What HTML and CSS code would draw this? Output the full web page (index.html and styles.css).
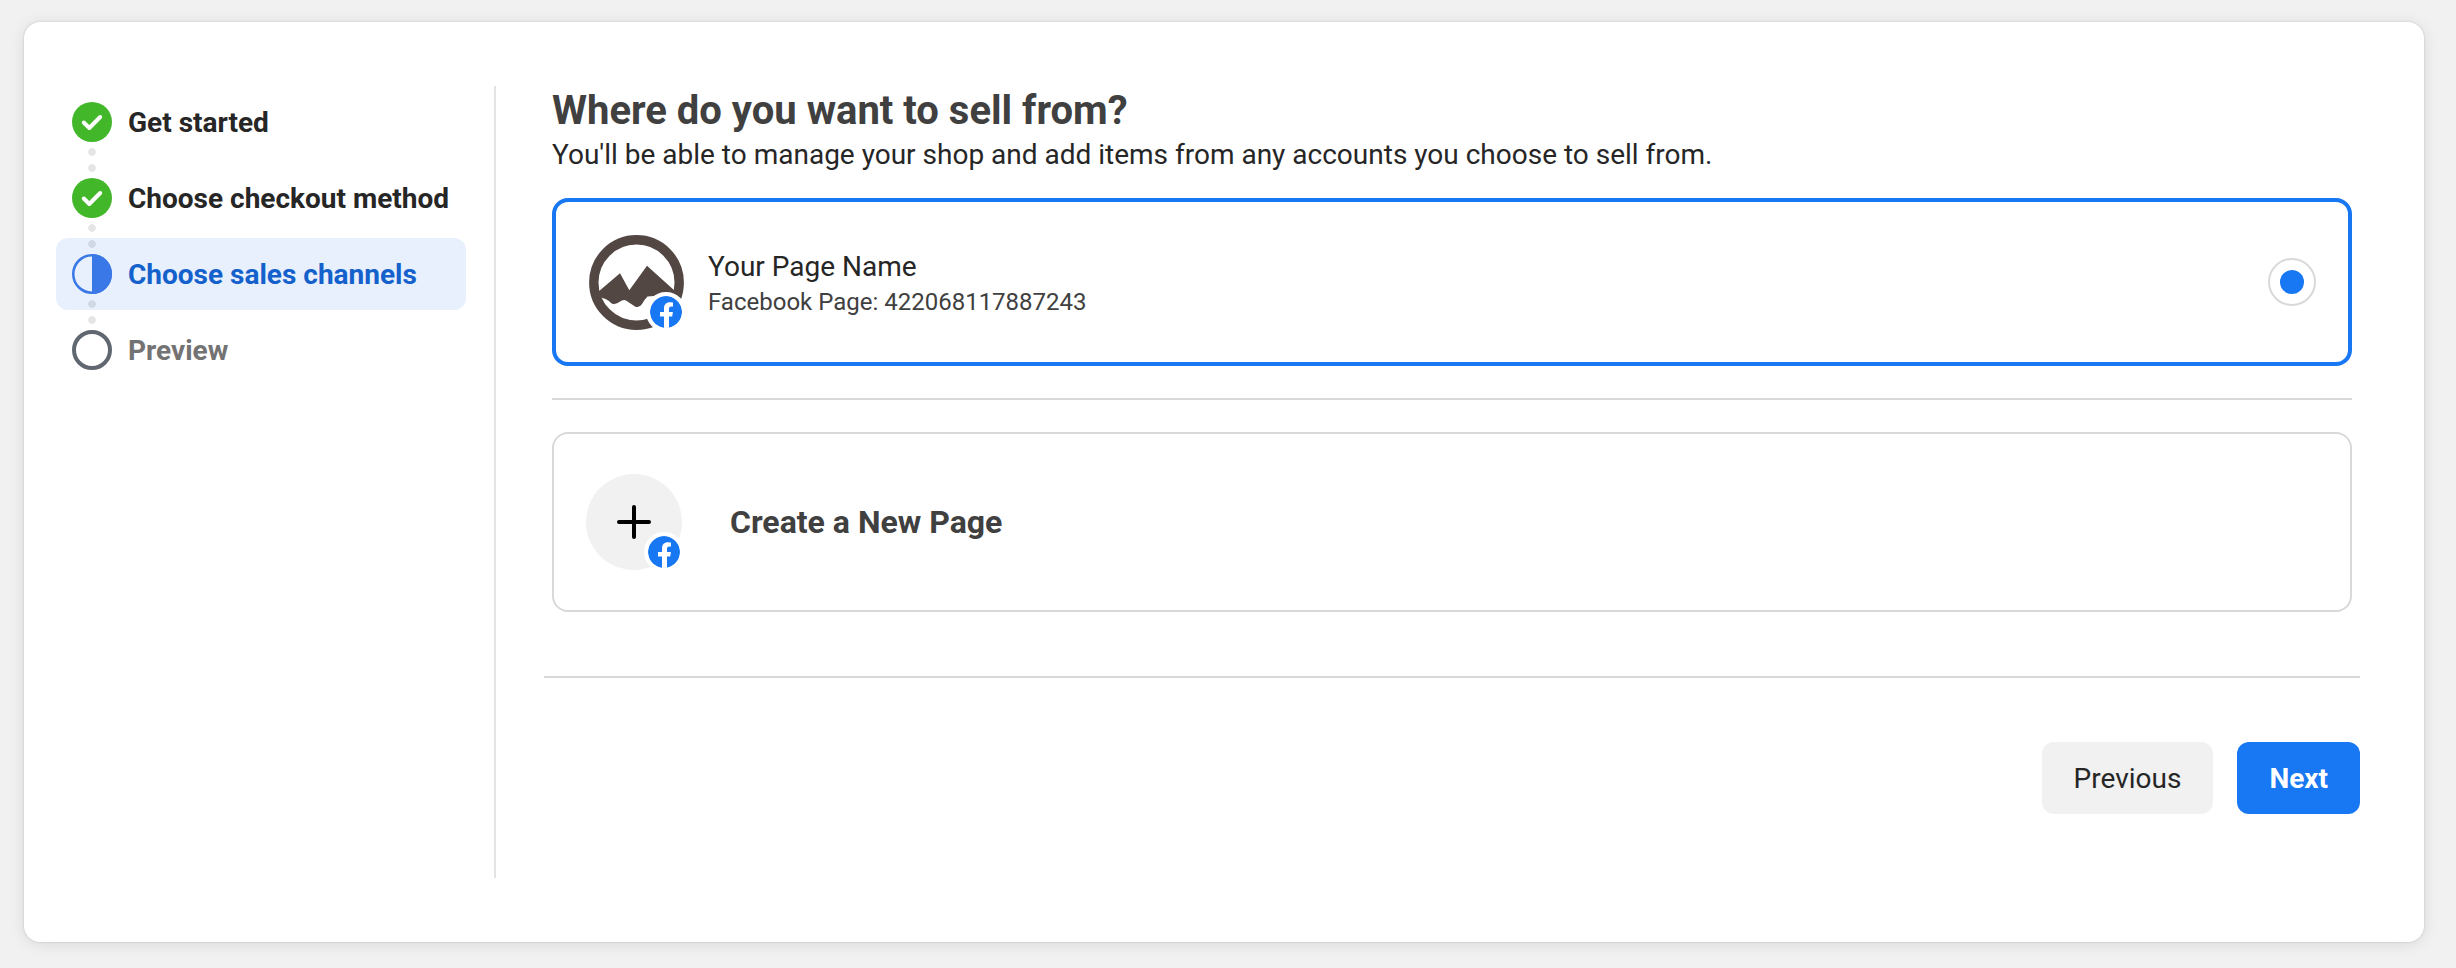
FILE: index.html
```html
<!DOCTYPE html>
<html lang="en">
<head>
  <meta charset="UTF-8">
  <meta name="viewport" content="width=device-width, initial-scale=1.0">
  <title>Choose sales channels</title>
  <link rel="stylesheet" href="styles.css">
</head>
<body>
  <!-- shared facebook badge -->
  <svg class="sprite" aria-hidden="true">
    <symbol id="fb" viewBox="0 0 32 32">
      <circle cx="16" cy="16" r="16" fill="#1877f2"/>
      <path fill="#fff" d="M14 32V20.500h-4V16h4v-3.500c0-4 2.300-6.200 6-6.200 1.700 0 3 .3 3 .3v3.900h-1.500c-2 0-2.500 1.200-2.500 2.400V16h3.900l-.7 4.500H19V32z"/>
    </symbol>
    <symbol id="check" viewBox="0 0 40 40">
      <circle cx="20" cy="20" r="20" fill="#42b72a"/>
      <path d="M11.800 20.500l5.500 5.500L28.200 15" fill="none" stroke="#fff" stroke-width="4" stroke-linecap="round" stroke-linejoin="round"/>
    </symbol>
  </svg>

  <div class="panel">
    <nav class="sidebar">
      <ol class="steps">
        <li class="step">
          <svg class="step-icon"><use href="#check"/></svg>
          <span>Get started</span>
        </li>
        <li class="step">
          <svg class="step-icon"><use href="#check"/></svg>
          <span>Choose checkout method</span>
        </li>
        <li class="step active" aria-current="step">
          <svg class="step-icon" viewBox="0 0 40 40">
            <circle cx="20" cy="20" r="18.750" fill="none" stroke="#3b78e7" stroke-width="2.500"/>
            <path d="M20 0a20 20 0 0 1 0 40z" fill="#3b78e7"/>
          </svg>
          <span>Choose sales channels</span>
        </li>
        <li class="step pending">
          <svg class="step-icon" viewBox="0 0 40 40">
            <circle cx="20" cy="20" r="18" fill="none" stroke="#606770" stroke-width="4"/>
          </svg>
          <span>Preview</span>
        </li>
      </ol>
    </nav>

    <form class="main">
      <div class="content">
        <h1>Where do you want to sell from?</h1>
        <p class="intro">You'll be able to manage your shop and add items from any accounts you choose to sell from.</p>

        <label class="option selected" for="page">
          <span class="avatar">
            <svg class="logo" viewBox="0 0 96 96">
              <circle cx="48.500" cy="48.500" r="42.700" fill="#fff" stroke="#524743" stroke-width="9.400"/>
              <path fill="#524743" d="M10 58L32 39.300 41.300 56.300 59 31.700 87 57V68L66 62l-6.500.5Q56 66 54 70Q51 74.500 47 72.500L38 66.500Q36 65.500 33 67Q28 70.500 25 70Q23 69.500 21 67Q18 64.500 13 63.500L10 66z"/>
            </svg>
            <svg class="badge"><use href="#fb"/></svg>
          </span>
          <span class="details">
            <span class="name">Your Page Name</span>
            <span class="meta">Facebook Page: 422068117887243</span>
          </span>
          <input class="radio" type="radio" id="page" name="channel" checked>
        </label>

        <hr class="line">

        <button class="option create" type="button">
          <span class="avatar plus">
            <svg class="logo" viewBox="0 0 96 96">
              <path d="M48 33v30M33 48h30" stroke="#000" stroke-width="4" stroke-linecap="round"/>
            </svg>
            <svg class="badge"><use href="#fb"/></svg>
          </span>
          <span>Create a New Page</span>
        </button>
      </div>

      <div class="actions">
        <button class="btn" type="button">Previous</button>
        <button class="btn primary" type="submit">Next</button>
      </div>
    </form>
  </div>
</body>
</html>
```
FILE: styles.css
```css
* {
  box-sizing: border-box;
}
body {
  margin: 0;
  padding: 22px 32px 26px 24px;
  background: #f1f1f1;
  color: #262626;
  font-family: Roboto, "Liberation Sans", sans-serif;
  font-size: 28px;
}
.sprite {
  position: absolute;
  width: 0;
  height: 0;
}
.panel {
  display: flex;
  padding: 64px 64px 64px 32px;
  background: #fff;
  border-radius: 16px;
  box-shadow: 0 0 2px rgba(0, 0, 0, 0.2), 0 2px 16px rgba(0, 0, 0, 0.1);
}

/* steps */
.sidebar {
  flex: none;
  width: 440px;
  padding-right: 28px;
  border-right: 2px solid #e4e4e4;
}
.steps {
  display: flex;
  flex-direction: column;
  gap: 4px;
  margin: 0;
  padding: 0;
  list-style: none;
}
.step {
  position: relative;
  display: flex;
  align-items: center;
  gap: 16px;
  height: 72px;
  padding: 0 16px;
  border-radius: 12px;
  font-weight: bold;
  white-space: nowrap;
}
.step-icon {
  flex: none;
  width: 40px;
  height: 40px;
}
/* two dots between this step and the next one */
.step:not(:last-child)::after {
  content: "";
  position: absolute;
  z-index: 1;
  top: 62px;
  left: 32px;
  width: 8px;
  height: 24px;
  background: radial-gradient(circle at 4px 4px, rgba(0, 0, 0, 0.1) 3.5px, transparent 4px) 0 0 / 8px 16px;
}
.step.active {
  background: #e8f0fe;
  color: #1461cc;
}
.step.pending {
  color: #737373;
}

/* main column */
.main {
  flex: 1;
  min-width: 0;
  padding: 0 0 64px 48px;
}
.content {
  padding: 0 8px;
}
h1 {
  margin: 0;
  color: #404040;
  font-size: 40px;
  line-height: 50px;
}
.intro {
  margin: 0 0 24px;
  line-height: 38px;
}
.option {
  display: flex;
  align-items: center;
  width: 100%;
  border: 2px solid #d9d9d9;
  border-radius: 16px;
  background: #fff;
  cursor: pointer;
}
.option.selected {
  gap: 24px;
  padding: 32px;
  border: 4px solid #1877f2;
}
.option.create {
  gap: 48px;
  padding: 40px 32px;
  color: #404040;
  font-family: inherit;
  font-size: 32px;
  font-weight: bold;
}
.avatar {
  position: relative;
  flex: none;
  width: 96px;
  height: 96px;
  border-radius: 50%;
}
.avatar.plus {
  background: #f1f1f1;
}
.logo {
  display: block;
  width: 96px;
  height: 96px;
}
.badge {
  position: absolute;
  right: -2px;
  bottom: -2px;
  width: 40px;
  height: 40px;
  border: 4px solid #fff;
  border-radius: 50%;
  background: #fff;
}
.details {
  flex: 1;
  display: flex;
  flex-direction: column;
  padding-top: 2px;
}
.name {
  line-height: 38px;
}
.meta {
  color: #404040;
  font-size: 24px;
  line-height: 32px;
}
.radio {
  appearance: none;
  flex: none;
  width: 48px;
  height: 48px;
  margin: 0;
  padding: 10px;
  border: 2px solid #d9d9d9;
  border-radius: 50%;
}
.radio:checked::before {
  content: "";
  display: block;
  width: 24px;
  height: 24px;
  border-radius: 50%;
  background: #1877f2;
}
.line {
  height: 2px;
  margin: 32px 0;
  border: none;
  background: #d9d9d9;
}
.actions {
  display: flex;
  justify-content: flex-end;
  gap: 24px;
  margin-top: 64px;
  padding-top: 64px;
  border-top: 2px solid #d9d9d9;
}
.btn {
  height: 72px;
  padding: 0 32px;
  border: none;
  border-radius: 12px;
  background: #f1f1f1;
  color: #262626;
  font-family: inherit;
  font-size: 28px;
  cursor: pointer;
}
.btn.primary {
  background: #1877f2;
  color: #fff;
  font-weight: bold;
}
```
